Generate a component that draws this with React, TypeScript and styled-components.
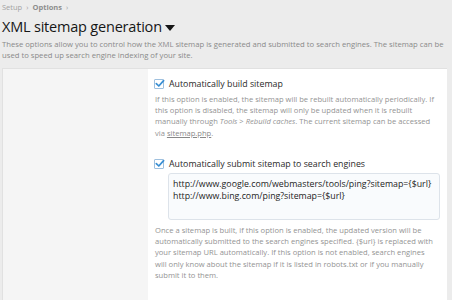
import React from "react";
import styled, { createGlobalStyle } from "styled-components";

const Global = createGlobalStyle`
  html, body { margin: 0; padding: 0; background: #ececec; }
  body { font-family: "Open Sans", "Noto Sans", sans-serif; overflow: hidden; }
`;

const Page = styled.div`
  width: 452px;
  height: 300px;
  overflow: hidden;
  display: flex;
  flex-direction: column;
`;

const Crumbs = styled.div`
  display: flex;
  gap: 4px;
  align-items: center;
  padding-left: 2px;
  height: 13px;
  font-size: 7.5px;
  color: #a3a3a3;
`;

const CrumbStrong = styled.span`
  font-weight: 700;
  color: #8e8e8e;
`;

const Title = styled.h1`
  margin: 3.5px 0 0 2px;
  font-size: 14.5px;
  letter-spacing: -0.2px;
  font-weight: 400;
  color: #161616;
  line-height: 20px;
  display: flex;
  align-items: center;
  gap: 3px;
`;

const Caret = styled.span`
  width: 0;
  height: 0;
  border-left: 5px solid transparent;
  border-right: 5px solid transparent;
  border-top: 6px solid #161616;
  margin-top: 2px;
`;

const Intro = styled.p`
  margin: 2px 0 0 2px;
  font-size: 7.7px;
  line-height: 11.5px;
  color: #8a8a8a;
  white-space: nowrap;
`;

const Panel = styled.div`
  margin: 6px 0 0 2px;
  width: 443px;
  flex: 1;
  display: grid;
  grid-template-columns: 145px 1fr;
  border: 1px solid #e1e1e1;
  border-bottom: none;
`;

const Side = styled.div`
  background: #f5f5f5;
`;

const Main = styled.div`
  background: #fff;
  padding: 9px 7px 0 6px;
  display: flex;
  flex-direction: column;
`;

const Option = styled.div<{ $gap?: number }>`
  margin-top: ${(p) => p.$gap ?? 0}px;
  display: flex;
  flex-direction: column;
`;

const CheckRow = styled.label`
  display: flex;
  align-items: center;
  gap: 5px;
  height: 12px;
  font-size: 8.8px;
  color: #2a2a2a;
  line-height: 12px;
  white-space: nowrap;
`;

const Box = styled.span`
  position: relative;
  width: 8px;
  height: 8px;
  border: 1px solid #9fc0de;
  border-radius: 1px;
  background: #fff;
  flex-shrink: 0;
`;

const Tick = styled.svg`
  position: absolute;
  left: 0px;
  top: -1px;
`;

const Explain = styled.p<{ $top: number }>`
  margin: ${(p) => p.$top}px 0 0 1px;
  font-size: 7.6px;
  line-height: 11.35px;
  color: #939393;
  white-space: nowrap;
`;

const Link = styled.span`
  text-decoration: underline;
  color: #888;
`;

const TextArea = styled.div`
  margin: 3px 0 0 14px;
  width: 266px;
  height: 36px;
  border: 1px solid #dde3ea;
  border-radius: 3px;
  background: #f9fbfd;
  padding: 4.5px 0 5px 4px;
  font-size: 8.8px;
  line-height: 12px;
  color: #242424;
  white-space: pre;
`;

const Check = () => (
  <Box>
    <Tick width="10" height="9" viewBox="0 0 10 9">
      <path d="M1.3 4.6 L3.8 7 L8.6 1.6" fill="none" stroke="#3a8fd3" strokeWidth="1.7" strokeLinecap="round" strokeLinejoin="round" />
    </Tick>
  </Box>
);

export default function App() {
  return (
    <Page>
      <Global />
      <Crumbs>
        <span>Setup</span>
        <span>›</span>
        <CrumbStrong>Options</CrumbStrong>
        <span>›</span>
      </Crumbs>
      <Title>
        XML sitemap generation <Caret />
      </Title>
      <Intro>
        These options allow you to control how the XML sitemap is generated and submitted to search engines. The sitemap can be
        <br />
        used to speed up search engine indexing of your site.
      </Intro>
      <Panel>
        <Side />
        <Main>
          <Option>
            <CheckRow>
              <Check />
              Automatically build sitemap
            </CheckRow>
            <Explain $top={4}>
              If this option is enabled, the sitemap will be rebuilt automatically periodically. If
              <br />
              this option is disabled, the sitemap will only be updated when it is rebuilt
              <br />
              manually through <i>Tools</i> &gt; <i>Rebuild caches</i>. The current sitemap can be accessed
              <br />
              via <Link>sitemap.php</Link>.
            </Explain>
          </Option>
          <Option $gap={19}>
            <CheckRow>
              <Check />
              Automatically submit sitemap to search engines
            </CheckRow>
            <TextArea>{"http://www.google.com/webmasters/tools/ping?sitemap={$url}\nhttp://www.bing.com/ping?sitemap={$url}"}</TextArea>
            <Explain $top={4.3}>
              Once a sitemap is built, if this option is enabled, the updated version will be
              <br />
              automatically submitted to the search engines specified. {"{$url}"} is replaced with
              <br />
              your sitemap URL automatically. If this option is not enabled, search engines
              <br />
              will only know about the sitemap if it is listed in robots.txt or if you manually
              <br />
              submit it to them.
            </Explain>
          </Option>
        </Main>
      </Panel>
    </Page>
  );
}
